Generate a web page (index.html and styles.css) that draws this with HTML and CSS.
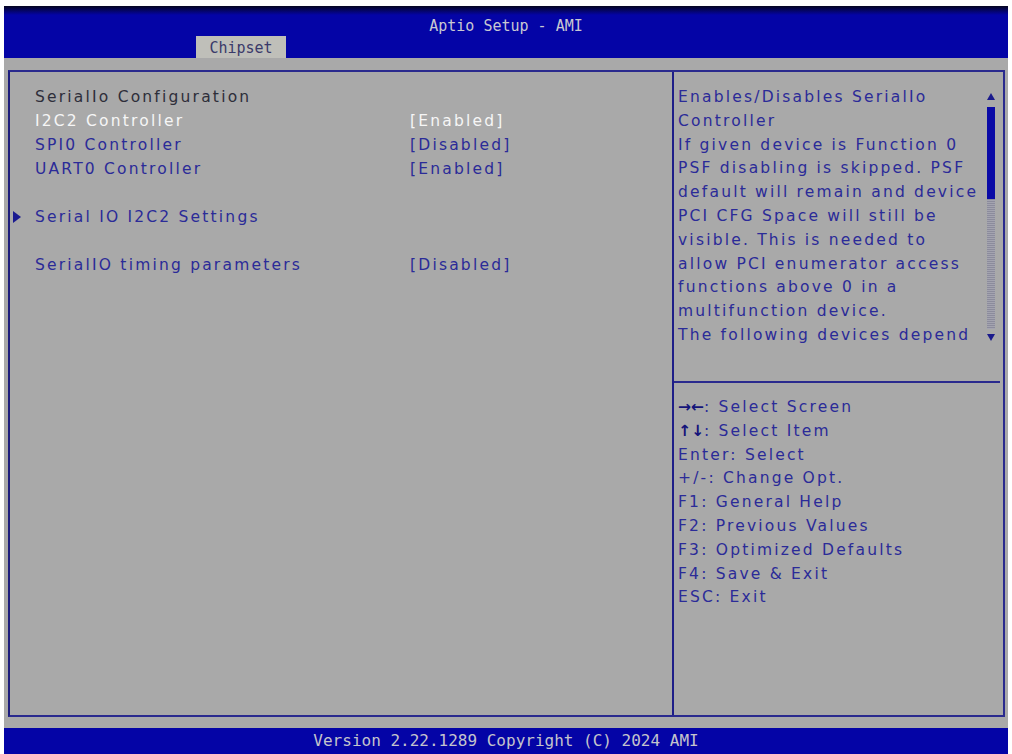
FILE: index.html
```html
<!DOCTYPE html>
<html lang="en">

<head>
  <meta charset="UTF-8">
  <title>Aptio Setup - AMI</title>
  <link rel="stylesheet" href="styles.css">
</head>

<body>
  <div class="screen">
    <div class="header">
      <div class="title">Aptio Setup - AMI</div>
      <div class="tabs">
        <span class="tab">Chipset</span>
      </div>
    </div>

    <div class="panel">
      <div class="menu">
        <div class="row heading">SerialIo Configuration</div>
        <div class="row selected"><span class="label">I2C2 Controller</span><span class="value">[Enabled]</span></div>
        <div class="row"><span class="label">SPI0 Controller</span><span class="value">[Disabled]</span></div>
        <div class="row"><span class="label">UART0 Controller</span><span class="value">[Enabled]</span></div>
        <div class="row blank"></div>
        <div class="row submenu"><span class="arrow"></span><span class="label">Serial IO I2C2 Settings</span></div>
        <div class="row blank"></div>
        <div class="row"><span class="label">SerialIO timing parameters</span><span class="value">[Disabled]</span></div>
      </div>

      <div class="side">
        <div class="help">
          <div class="help-text">
            <div class="line">Enables/Disables SerialIo</div>
            <div class="line">Controller</div>
            <div class="line">If given device is Function 0</div>
            <div class="line">PSF disabling is skipped. PSF</div>
            <div class="line">default will remain and device</div>
            <div class="line">PCI CFG Space will still be</div>
            <div class="line">visible. This is needed to</div>
            <div class="line">allow PCI enumerator access</div>
            <div class="line">functions above 0 in a</div>
            <div class="line">multifunction device.</div>
            <div class="line">The following devices depend</div>
          </div>
          <div class="scrollbar">
            <span class="scroll-up"></span>
            <span class="thumb"></span>
            <span class="track"></span>
            <span class="scroll-down"></span>
          </div>
        </div>
        <div class="keys">
          <div class="line"><span class="key-arrows">&rarr;&larr;</span>: Select Screen</div>
          <div class="line"><span class="key-arrows">&uarr;&darr;</span>: Select Item</div>
          <div class="line">Enter: Select</div>
          <div class="line">+/-: Change Opt.</div>
          <div class="line">F1: General Help</div>
          <div class="line">F2: Previous Values</div>
          <div class="line">F3: Optimized Defaults</div>
          <div class="line">F4: Save &amp; Exit</div>
          <div class="line">ESC: Exit</div>
        </div>
      </div>
    </div>

    <div class="footer">Version 2.22.1289 Copyright (C) 2024 AMI</div>
  </div>
</body>

</html>
```

FILE: styles.css
```css
* {
  box-sizing: border-box;
}

body {
  margin: 0;
  background: #ffffff;
  font-family: "DejaVu Sans", sans-serif;
}

.screen {
  margin: 6px 4px 0 4px;
  height: 748px;
  background: #a9a9a9;
  display: flex;
  flex-direction: column;
}

.header {
  height: 52px;
  background: linear-gradient(#050520 0, #0404a6 9px, #0404a6 100%);
  display: flex;
  flex-direction: column;
}

.title {
  height: 30px;
  padding-top: 11px;
  text-align: center;
  font-family: "DejaVu Sans Mono", monospace;
  font-size: 15px;
  color: #c8c8d2;
}

.tabs {
  height: 22px;
  padding-left: 192px;
  display: flex;
}

.tab {
  width: 90px;
  height: 22px;
  background: #bfbfb9;
  color: #3a3a6a;
  font-family: "DejaVu Sans Mono", monospace;
  font-size: 15px;
  text-align: center;
  line-height: 24px;
}

.panel {
  margin: 12px 3px 0 4px;
  height: 647px;
  border: 2px solid #2a2a8e;
  border-left-color: #1c1c7c;
  display: flex;
  font-size: 15.5px;
  letter-spacing: 2.2px;
}

.menu {
  width: 664px;
  border-right: 2px solid #1e1e88;
  padding: 13px 0 0 25px;
  color: #2b2b98;
}

.row {
  height: 24px;
  line-height: 24px;
  display: flex;
  white-space: nowrap;
}

.row .label {
  width: 375px;
}

.heading {
  color: #2e2e3a;
}

.selected {
  color: #f6f6f6;
}

.submenu .arrow {
  width: 0;
  height: 0;
  margin: 6px 14px 0 -22px;
  border-top: 6px solid transparent;
  border-bottom: 6px solid transparent;
  border-left: 8px solid #1a1a90;
}

.side {
  flex: 1;
  display: flex;
  flex-direction: column;
  color: #2b2b98;
}

.help {
  height: 311px;
  padding: 13px 5px 0 4px;
  border-bottom: 2px solid #2a2a8e;
  margin-right: 3px;
  display: flex;
}

.help-text {
  flex: 1;
}

.line {
  height: 23.8px;
  line-height: 24px;
  white-space: nowrap;
}

.scrollbar {
  width: 8px;
  display: flex;
  flex-direction: column;
  align-items: center;
  padding-top: 8px;
}

.scroll-up {
  width: 0;
  height: 0;
  border-left: 4px solid transparent;
  border-right: 4px solid transparent;
  border-bottom: 7px solid #1a1a8c;
}

.thumb {
  width: 8px;
  height: 92px;
  margin-top: 7px;
  background: #0a0aa6;
}

.track {
  width: 8px;
  height: 130px;
  background: repeating-linear-gradient(#8c8c9c 0, #8c8c9c 1px, #a4a4b0 1px, #a4a4b0 2px);
}

.scroll-down {
  width: 0;
  height: 0;
  margin-top: 5px;
  border-left: 4px solid transparent;
  border-right: 4px solid transparent;
  border-top: 7px solid #1a1a8c;
}

.keys {
  padding: 12px 0 0 4px;
}

.key-arrows {
  color: #14147a;
  letter-spacing: 0;
  font-weight: bold;
}

.footer {
  margin-top: 11px;
  height: 26px;
  background: #0404a6;
  color: #c4c4cc;
  text-align: center;
  font-family: "DejaVu Sans Mono", monospace;
  font-size: 16px;
  line-height: 26px;
}
```
